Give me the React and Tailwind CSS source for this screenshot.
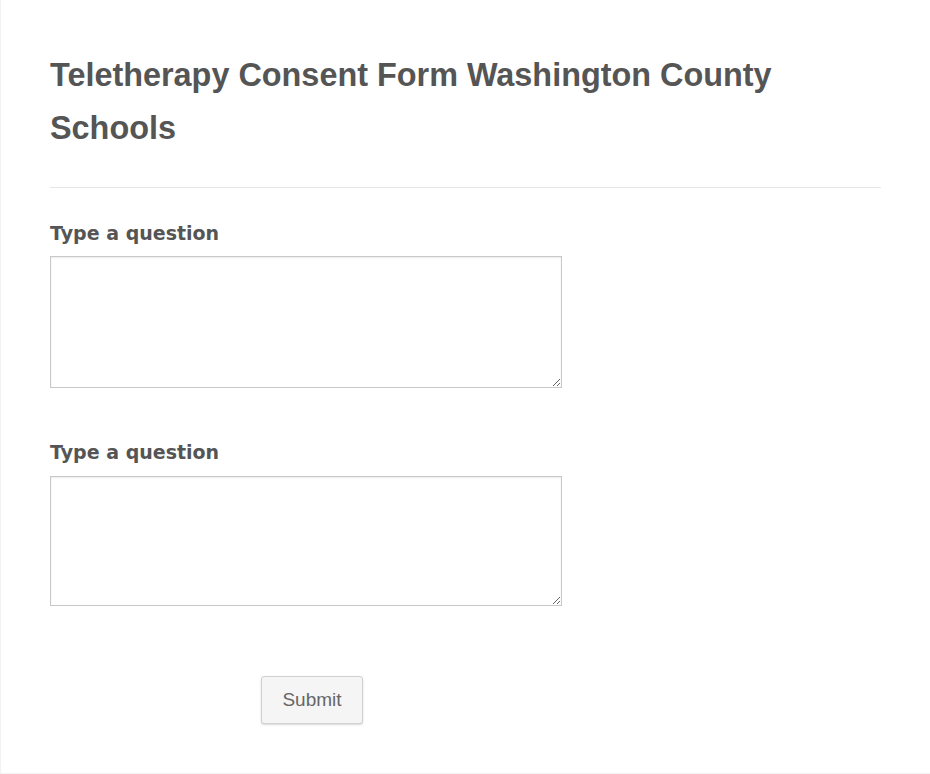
export default function App() {
  return (
    <div className="min-h-[774px] bg-white">
      <div className="h-[774px] border-l border-b border-[#f2f2f2] px-[49px] pt-[49px]">
        <h1 className="font-['Liberation_Sans',Arial,sans-serif] text-[32.4px] leading-[53px] font-bold text-[#555] w-[780px]">
          Teletherapy Consent Form Washington County Schools
        </h1>
        <div className="mt-[32px] border-t border-[#e6e6e6] w-[831px]" />
        <div className="font-['DejaVu_Sans',Verdana,sans-serif]">
          <div className="pt-[33px]">
            <label className="block text-[19px] leading-[24px] font-bold text-[#555]">Type a question</label>
            <textarea className="mt-[11px] block w-[512px] h-[132px] border border-[#c8c8c8] shadow-[inset_0_1px_2px_rgba(0,0,0,0.08)] bg-white resize-y" />
          </div>
          <div className="pt-[52px]">
            <label className="block text-[19px] leading-[24px] font-bold text-[#555]">Type a question</label>
            <textarea className="mt-[12px] block w-[512px] h-[130px] border border-[#c8c8c8] shadow-[inset_0_1px_2px_rgba(0,0,0,0.08)] bg-white resize-y" />
          </div>
        </div>
        <div className="pt-[70px] pl-[211px]">
          <button className="w-[102px] h-[48px] bg-[#f5f5f5] border border-[#d0d0d0] rounded-[3px] shadow-[0_1px_2px_rgba(0,0,0,0.15)] font-['Liberation_Sans',Arial,sans-serif] text-[19px] text-[#666]">
            Submit
          </button>
        </div>
      </div>
    </div>
  );
}
